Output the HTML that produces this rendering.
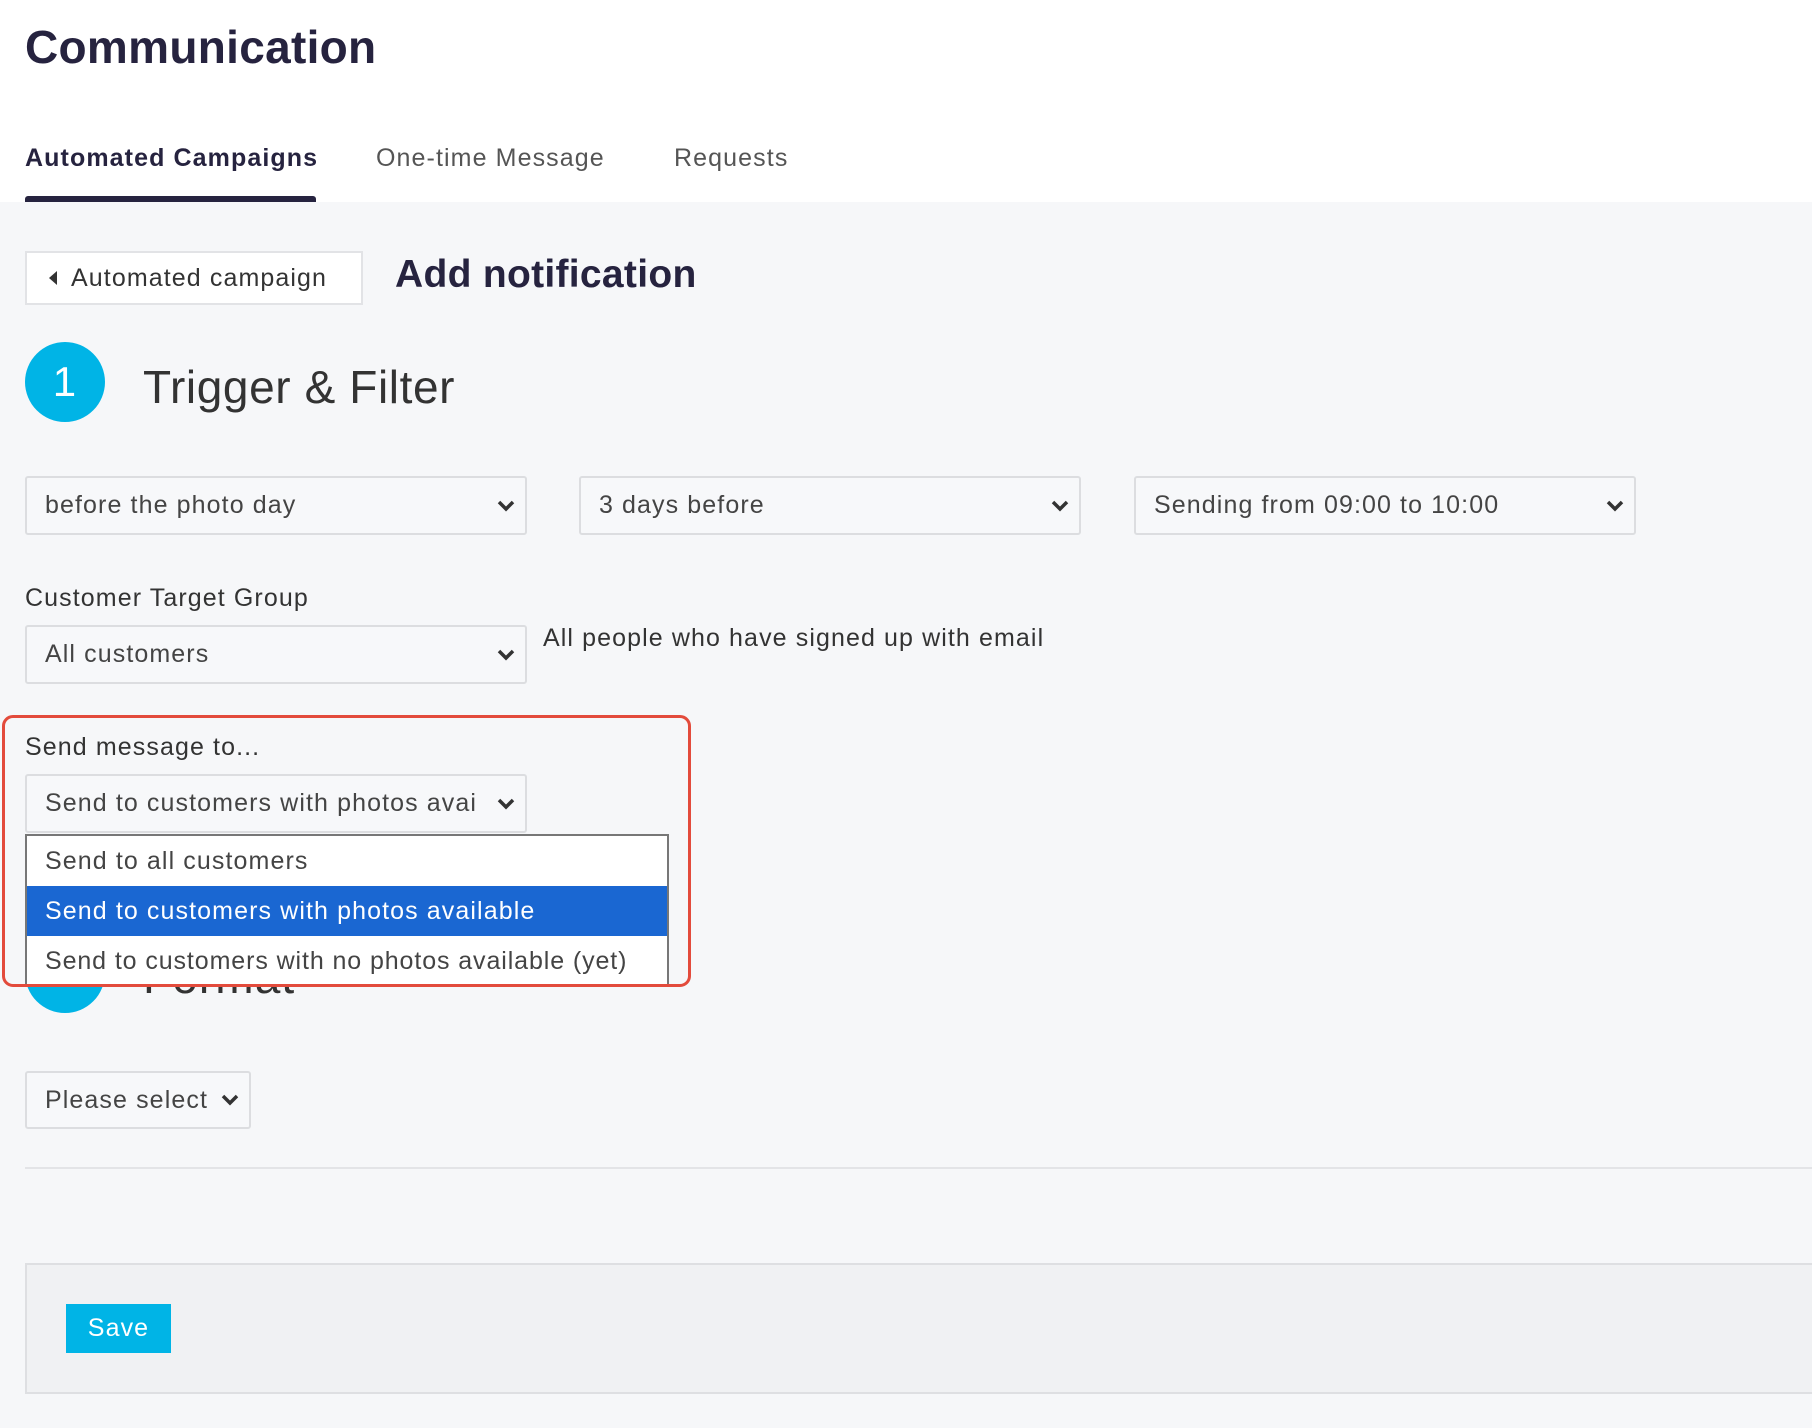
<!DOCTYPE html>
<html><head><style>
*{box-sizing:border-box;margin:0;padding:0}
body{width:1812px;height:1428px;background:#f6f7f9;font-family:"Liberation Sans",sans-serif;color:#333;position:relative;overflow:hidden;letter-spacing:1.1px}
.a{position:absolute}
.hdr{left:0;top:0;width:1812px;height:202px;background:#fff}
.sel{position:absolute;background:#f7f8fa;border:2px solid #dcdde0;border-radius:3px;font-size:25px;color:#444;padding-left:18px;display:flex;align-items:center}
.sel svg{position:absolute;right:10px;top:50%;margin-top:-7px}
.circ{position:absolute;width:80px;height:80px;border-radius:50%;background:#00b4e6;color:#fff;font-size:42px;display:flex;align-items:center;justify-content:center}
.opt{position:absolute;left:0;width:100%;height:50px;font-size:25px;padding-left:18px;display:flex;align-items:center;color:#444}
</style></head><body>
<div class="a hdr"></div>
<div class="a" style="left:25px;top:20px;font-size:46px;font-weight:bold;color:#26233f;letter-spacing:0.3px">Communication</div>
<div class="a" style="left:25px;top:144px;font-size:25px;font-weight:bold;color:#26233f">Automated Campaigns</div>
<div class="a" style="left:376px;top:144px;font-size:25px;color:#555">One-time Message</div>
<div class="a" style="left:674px;top:144px;font-size:25px;color:#555">Requests</div>
<div class="a" style="left:25px;top:196px;width:291px;height:6px;background:#26233f;border-radius:3px 3px 0 0"></div>

<div class="a" style="left:25px;top:251px;width:338px;height:54px;background:#fff;border:2px solid #e2e3e6;font-size:25px;color:#333;display:flex;align-items:center;padding-left:22px"><span style="display:inline-block;width:0;height:0;border-top:7px solid transparent;border-bottom:7px solid transparent;border-right:8px solid #333;margin-right:14px"></span>Automated campaign</div>
<div class="a" style="left:395px;top:253px;font-size:39px;font-weight:bold;color:#26233f;letter-spacing:0.3px">Add notification</div>

<div class="circ" style="left:25px;top:342px">1</div>
<div class="a" style="left:143px;top:360px;font-size:46px;color:#333;letter-spacing:0.6px">Trigger &amp; Filter</div>

<div class="sel" style="left:25px;top:476px;width:502px;height:59px">before the photo day<svg width="18" height="14" viewBox="0 0 18 14"><path d="M2 3l7 7 7-7" fill="none" stroke="#333" stroke-width="3.5"/></svg></div>
<div class="sel" style="left:579px;top:476px;width:502px;height:59px">3 days before<svg width="18" height="14" viewBox="0 0 18 14"><path d="M2 3l7 7 7-7" fill="none" stroke="#333" stroke-width="3.5"/></svg></div>
<div class="sel" style="left:1134px;top:476px;width:502px;height:59px">Sending from 09:00 to 10:00<svg width="18" height="14" viewBox="0 0 18 14"><path d="M2 3l7 7 7-7" fill="none" stroke="#333" stroke-width="3.5"/></svg></div>

<div class="a" style="left:25px;top:584px;font-size:25px;color:#333">Customer Target Group</div>
<div class="sel" style="left:25px;top:625px;width:502px;height:59px">All customers<svg width="18" height="14" viewBox="0 0 18 14"><path d="M2 3l7 7 7-7" fill="none" stroke="#333" stroke-width="3.5"/></svg></div>
<div class="a" style="left:543px;top:624px;font-size:25px;color:#333">All people who have signed up with email</div>

<div class="circ" style="left:25px;top:933px">2</div>
<div class="a" style="left:143px;top:950px;font-size:46px;color:#333">Format</div>

<div class="a" style="left:5px;top:718px;width:683px;height:266px;overflow:hidden">
<div class="a" style="left:20px;top:15px;font-size:25px;color:#333">Send message to...</div>
<div class="sel" style="left:20px;top:56px;width:502px;height:59px;overflow:hidden;white-space:nowrap">Send to customers with photos avai<svg width="18" height="14" viewBox="0 0 18 14" style="background:#f7f8fa"><path d="M2 3l7 7 7-7" fill="none" stroke="#333" stroke-width="3.5"/></svg></div>
<div class="a" style="left:20px;top:116px;width:644px;height:160px;background:#fff;border:2px solid #777;border-bottom:none">
<div class="opt" style="top:0">Send to all customers</div>
<div class="opt" style="top:50px;background:#1a67d2;color:#fff">Send to customers with photos available</div>
<div class="opt" style="top:100px;white-space:nowrap;letter-spacing:0.9px">Send to customers with no photos available (yet)</div>
</div>
</div>
<div class="a" style="left:2px;top:715px;width:689px;height:272px;border:3px solid #e34b3c;border-radius:11px"></div>

<div class="sel" style="left:25px;top:1071px;width:226px;height:58px">Please select<svg width="18" height="14" viewBox="0 0 18 14"><path d="M2 3l7 7 7-7" fill="none" stroke="#333" stroke-width="3.5"/></svg></div>

<div class="a" style="left:25px;top:1167px;width:1787px;height:2px;background:#e3e4e7"></div>
<div class="a" style="left:25px;top:1263px;width:1800px;height:131px;background:#f0f1f3;border:2px solid #dedfe2"></div>
<div class="a" style="left:66px;top:1304px;width:105px;height:49px;background:#00b4e6;color:#fff;font-size:25px;display:flex;align-items:center;justify-content:center">Save</div>
</body></html>
